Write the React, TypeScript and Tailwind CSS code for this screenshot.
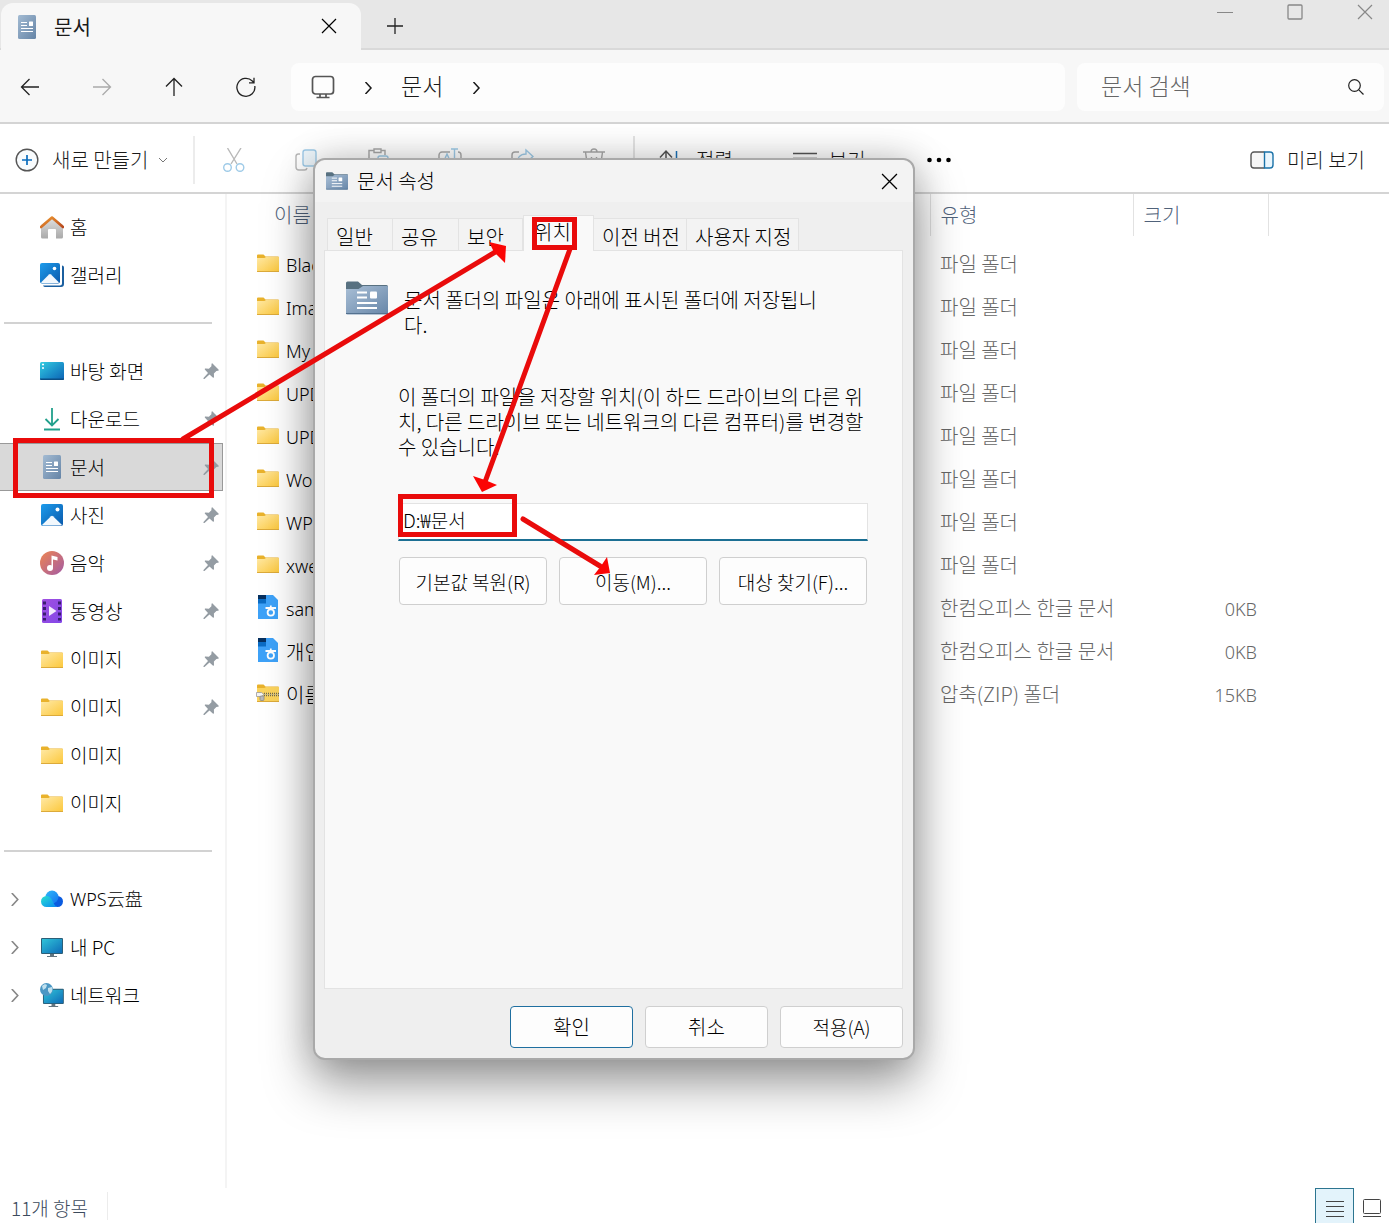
import React from 'react'

type IconProps = { className?: string }

const FolderIcon = ({ className = 'h-6 w-6' }: IconProps) => (
  <svg viewBox="0 0 24 24" className={className} aria-hidden="true">
    <defs>
      <linearGradient id="folderFace" x1="0" y1="0" x2="1" y2="1">
        <stop offset="0" stopColor="#ffe9a6" />
        <stop offset="1" stopColor="#fcc83c" />
      </linearGradient>
    </defs>
    <path d="M1 4.500a1 1 0 0 1 1-1h5.500l2 2H22a1 1 0 0 1 1 1V12H1z" fill="#e9b22c" />
    <path d="M1 7h7.500L10 6h12.500a.5.5 0 0 1 .5.500V20a.6.600 0 0 1-.6.600H1.600A.6.600 0 0 1 1 20z" fill="url(#folderFace)" />
    <path d="M1 20h22v.4a.6.600 0 0 1-.6.600H1.600a.6.600 0 0 1-.6-.6z" fill="#dcaa3a" />
  </svg>
)

const ZipIcon = () => (
  <svg viewBox="0 0 24 24" className="h-6 w-6" aria-hidden="true">
    <path d="M1 4.500a1 1 0 0 1 1-1h5.500l2 2H22a1 1 0 0 1 1 1V12H1z" fill="#e9b22c" />
    <path d="M1 7h7.500L10 6h13v15H1z" fill="#fbd35c" />
    <path d="M1 20h22v1H1z" fill="#dcaa3a" />
    <path d="M8 12.500h15M8 14.500h15" stroke="#6d674f" strokeWidth="1.400" strokeDasharray="1 1" />
    <path d="M8 13.500h15" stroke="#c9bd8a" strokeWidth=".8" />
    <path d="M.5 11.500h5l2.500 2-2.500 2h-5z" fill="#f4f4f4" stroke="#9b9b9b" strokeWidth=".8" />
    <rect x="4" y="15" width="4" height="4.500" rx="1" fill="#b9b9b9" stroke="#8c8c8c" strokeWidth=".8" />
  </svg>
)

const HangulDocIcon = () => (
  <svg viewBox="0 0 24 24" className="h-6 w-6" aria-hidden="true">
    <path d="M2 0h15l5 5v19H2z" fill="#3ea2f8" />
    <path d="M2 0h8v8.500H2z" fill="#0b6cc4" />
    <path d="M2 0h8v4H2z" fill="#06305f" />
    <g fill="none" stroke="#fff" strokeWidth="1.800">
      <circle cx="14.800" cy="17.500" r="3.200" />
      <path d="M9.500 13h10.500M14.800 10.500V13" />
    </g>
  </svg>
)

const DocIcon = ({ className = 'h-6 w-6' }: IconProps) => (
  <svg viewBox="0 0 24 24" className={className} aria-hidden="true">
    <defs>
      <linearGradient id="docFace" x1="0" y1="0" x2="1" y2="1">
        <stop offset="0" stopColor="#a3bbd3" />
        <stop offset="1" stopColor="#6584a6" />
      </linearGradient>
    </defs>
    <rect x="3" y="0" width="18" height="24" rx="1.500" fill="url(#docFace)" />
    <path d="M6 7.500h6M6 10.500h6M6 13.500h12M6 16.500h12" stroke="#fff" strokeWidth="1.100" />
    <rect x="14" y="6.500" width="4" height="4.500" rx=".5" fill="#fff" />
  </svg>
)

const DocFolderIcon = ({ className }: IconProps) => (
  <svg viewBox="0 0 42 34" className={className} aria-hidden="true">
    <defs>
      <linearGradient id="docFolder" x1="0" y1="0" x2="1" y2="1">
        <stop offset="0" stopColor="#a9bfd6" />
        <stop offset="1" stopColor="#6786a8" />
      </linearGradient>
    </defs>
    <path d="M0 2a1.500 1.500 0 0 1 1.500-1.500H12l4 3.500h24.500A1.500 1.500 0 0 1 42 5.500V20H0z" fill="#587181" />
    <path d="M0 8h12.500L17 5h24a1 1 0 0 1 1 1v26a1.500 1.500 0 0 1-1.500 1.500h-39A1.500 1.500 0 0 1 0 32z" fill="url(#docFolder)" />
    <path d="M0 32.500h42" stroke="#54718f" />
    <path d="M11 11.500h10M11 16.500h10M11 22h20M11 27h20" stroke="#fff" strokeWidth="1.800" />
    <rect x="24" y="10.500" width="7" height="7" rx="1" fill="#fff" />
  </svg>
)

const HomeIcon = () => (
  <svg viewBox="0 0 24 24" className="h-6 w-6" aria-hidden="true">
    <defs>
      <linearGradient id="homeWall" x1="0" y1="0" x2="0" y2="1">
        <stop offset="0" stopColor="#e4e4e4" />
        <stop offset="1" stopColor="#a9a9a9" />
      </linearGradient>
      <linearGradient id="homeRoof" x1="0" y1="0" x2="1" y2="1">
        <stop offset="0" stopColor="#f09a30" />
        <stop offset="1" stopColor="#b8481c" />
      </linearGradient>
    </defs>
    <path d="M1 10 12 1.500 23 10v12a1.500 1.500 0 0 1-1.500 1.500H16V15a1 1 0 0 0-1-1H9a1 1 0 0 0-1 1v8.500H2.500A1.500 1.500 0 0 1 1 22z" fill="url(#homeWall)" />
    <path d="M1 12 12 2.500 23 12" fill="none" stroke="url(#homeRoof)" strokeWidth="2.600" strokeLinecap="round" strokeLinejoin="round" />
  </svg>
)

const PictureIcon = () => (
  <svg viewBox="0 0 24 24" className="h-6 w-6" aria-hidden="true">
    <defs>
      <linearGradient id="pictureSky" x1="0" y1="0" x2="1" y2="1">
        <stop offset="0" stopColor="#1d9cec" />
        <stop offset="1" stopColor="#0a59ab" />
      </linearGradient>
    </defs>
    <rect x="1" y="1" width="22" height="22" rx="2" fill="url(#pictureSky)" />
    <circle cx="17.500" cy="6.500" r="2" fill="#fff" />
    <path d="M2 22 11 13.200a1.500 1.500 0 0 1 2 0L22 22a2 2 0 0 1-1 .5H3a2 2 0 0 1-1-.5z" fill="#f2f8fd" />
  </svg>
)

const GalleryIcon = () => (
  <svg viewBox="0 0 24 24" className="h-6 w-6" aria-hidden="true">
    <path d="M22 2.500a2 2 0 0 1 2 2V21a3 3 0 0 1-3 3H5a2 2 0 0 1-2-1.500h17a2 2 0 0 0 2-2z" fill="#1b5f9f" />
    <rect width="20" height="20.500" rx="2" fill="url(#pictureSky)" />
    <circle cx="14.500" cy="5.500" r="1.800" fill="#fff" />
    <path d="M1 19.500 9 11.400a1.500 1.500 0 0 1 2 0l8 8.100a2 2 0 0 1-1 .5H2a2 2 0 0 1-1-.5z" fill="#f2f8fd" />
  </svg>
)

const DesktopIcon = () => (
  <svg viewBox="0 0 24 24" className="h-6 w-6" aria-hidden="true">
    <defs>
      <linearGradient id="desktopFace" x1="0" y1="0" x2="1" y2="1">
        <stop offset="0" stopColor="#34cde0" />
        <stop offset=".5" stopColor="#1d96cc" />
        <stop offset="1" stopColor="#0c62b4" />
      </linearGradient>
    </defs>
    <rect y="3" width="24" height="18" rx="1.500" fill="url(#desktopFace)" />
    <path d="M2 5.500h2M2 9h2" stroke="#fff" strokeWidth="1.500" />
    <path d="M0 19.500h24V20a1 1 0 0 1-1 1H1a1 1 0 0 1-1-1z" fill="#0b4f86" />
  </svg>
)

const DownloadIcon = () => (
  <svg viewBox="0 0 24 24" className="h-6 w-6" fill="none" stroke="#22a08c" strokeWidth="1.800" aria-hidden="true">
    <path d="M12 1v17M5.500 12l6.500 6.500 6.500-6.500M4 22.500h16" />
  </svg>
)

const MusicIcon = () => (
  <svg viewBox="0 0 24 24" className="h-6 w-6" aria-hidden="true">
    <defs>
      <linearGradient id="musicFace" x1="0" y1="0" x2="1" y2="1">
        <stop offset="0" stopColor="#ee8551" />
        <stop offset="1" stopColor="#a35ba5" />
      </linearGradient>
    </defs>
    <circle cx="12" cy="12" r="12" fill="url(#musicFace)" />
    <path d="M11.500 4.500 17.500 6v3.500L13 8.500V17h-1.500z" fill="#fff" />
    <circle cx="10" cy="17" r="3" fill="#fff" />
  </svg>
)

const VideoIcon = () => (
  <svg viewBox="0 0 24 24" className="h-6 w-6" aria-hidden="true">
    <defs>
      <linearGradient id="videoFace" x1="0" y1="0" x2="1" y2="1">
        <stop offset="0" stopColor="#a04fe0" />
        <stop offset="1" stopColor="#8347e8" />
      </linearGradient>
    </defs>
    <rect x="2" y="0" width="20" height="24" rx="1.500" fill="url(#videoFace)" />
    <path d="M4.500 2.500v19M19.500 2.500v19" stroke="#3a1d70" strokeWidth="3" strokeDasharray="3 2.500" />
    <path d="M9 7v10l7.500-5z" fill="#f3eafd" />
  </svg>
)

const CloudIcon = () => (
  <svg viewBox="0 0 24 24" className="h-6 w-6" aria-hidden="true">
    <defs>
      <linearGradient id="cloudLeft" x1="0" y1="0" x2="1" y2="1">
        <stop offset="0" stopColor="#29e0d0" />
        <stop offset="1" stopColor="#0a86f4" />
      </linearGradient>
      <linearGradient id="cloudTop" x1="0" y1="0" x2="1" y2="1">
        <stop offset="0" stopColor="#2fb9f9" />
        <stop offset="1" stopColor="#1273ef" />
      </linearGradient>
    </defs>
    <circle cx="17.500" cy="14.500" r="5.500" fill="#0a5be0" />
    <circle cx="12" cy="10" r="6.500" fill="url(#cloudTop)" />
    <path d="M6.500 9a5.500 5.500 0 0 0 0 11h11c-2-.5-3-2-4.500-5s-3-6-6.500-6z" fill="url(#cloudLeft)" />
  </svg>
)

const Screen = () => (
  <g>
    <defs>
      <linearGradient id="screenFace" x1="0" y1="0" x2="1" y2="1">
        <stop offset="0" stopColor="#30c4d8" />
        <stop offset="1" stopColor="#0e6cb8" />
      </linearGradient>
    </defs>
    <rect x="1" y="3" width="22" height="16" rx="1" fill="#2c5f78" />
    <rect x="2" y="4" width="20" height="14" fill="url(#screenFace)" />
    <path d="M10 19h4v2h3v1H7v-1h3z" fill="#64757f" />
  </g>
)

const PcIcon = () => (
  <svg viewBox="0 0 24 24" className="h-6 w-6" aria-hidden="true">
    <Screen />
  </svg>
)

const NetworkIcon = () => (
  <svg viewBox="0 0 24 24" className="h-6 w-6" aria-hidden="true">
    <g transform="translate(2 3) scale(.95)">
      <Screen />
    </g>
    <circle cx="6.500" cy="6.500" r="6.500" fill="#4b97c4" />
    <path d="M2 3c2-2 4-2 5-1l-1 3-3 2zM8 5l4-1c1 3 0 5-2 7l-2-3z" fill="#bfe0ee" />
  </svg>
)

const PinIcon = () => (
  <svg viewBox="0 0 16 16" className="h-4 w-4" fill="#949ca3" aria-hidden="true">
    <path d="M9.500.500 15.500 6.500c.5.600.2 1.200-.6 1.300l-1.500.2-2.500 2.600.1 3.400c0 .8-.7 1-1.200.5L6.500 11.500 1.500 16 .500 16 .5 15 5 9.900 2 6.800c-.5-.5-.3-1.200.5-1.200l3.400.1 2.500-2.500.1-2c.1-.9.600-1.200 1-.7z" />
  </svg>
)

const Chevron = ({ className }: IconProps) => (
  <svg viewBox="0 0 12 12" className={className} fill="none" stroke="currentColor" aria-hidden="true">
    <path d="M3.500 0 9 6l-5.500 6" />
  </svg>
)

const ChevronDown = () => (
  <svg viewBox="0 0 10 10" className="h-[10px] w-[10px]" fill="none" stroke="#777" aria-hidden="true">
    <path d="M1 3l4 4 4-4" />
  </svg>
)

const Close = ({ className }: IconProps) => (
  <svg viewBox="0 0 16 16" className={className} fill="none" stroke="currentColor" strokeWidth="1.200" aria-hidden="true">
    <path d="M1 1l14 14M15 1 1 15" />
  </svg>
)

const toolIcons = [
  {
    name: '잘라내기',
    drawing: (
      <>
        <path d="M5.500 0l9.500 16M19 0 9 16" stroke="#b9b9b9" />
        <circle cx="5.500" cy="19.500" r="3.800" />
        <circle cx="18" cy="19.500" r="3.800" />
      </>
    ),
  },
  {
    name: '복사',
    drawing: (
      <>
        <path d="M6 6H4.500A2.500 2.500 0 0 0 2 8.500V19a3 3 0 0 0 3 3h5.500a2.500 2.500 0 0 0 2.500-2" stroke="#b9b9b9" />
        <rect x="9" y="2" width="13" height="16" rx="2.500" fill="#eef6fb" />
      </>
    ),
  },
  {
    name: '붙여넣기',
    drawing: (
      <>
        <path d="M8 2.500H3v19h8M15 2.500h4V7M8 1h7v3.500H8z" stroke="#a8a8a8" />
        <rect x="12" y="8" width="10" height="13" rx="2" />
      </>
    ),
  },
  {
    name: '이름 바꾸기',
    drawing: (
      <>
        <path d="M12 4H4a3 3 0 0 0-3 3v10a3 3 0 0 0 3 3h8M20 4a3 3 0 0 1 3 3v10a3 3 0 0 1-3 3" stroke="#a8a8a8" />
        <path d="M13 1h7M16.500 1v22M5 15l4-9 4 9" />
      </>
    ),
  },
  {
    name: '공유',
    drawing: (
      <>
        <path d="M9 4H5a3 3 0 0 0-3 3v12a3 3 0 0 0 3 3h11a3 3 0 0 0 3-3" stroke="#a8a8a8" />
        <path d="M16 2l7 6.500-7 6v-3.500c-4 0-6.500 1.500-9 4.500 0-5.500 3-9.500 9-9.500z" />
      </>
    ),
  },
  {
    name: '삭제',
    drawing: <path d="M1 4h22M3.500 4 6 22h12l2.500-18M9 4a3 3 0 0 1 6 0M9.500 9v8M14.500 9v8" stroke="#a8a8a8" />,
  },
]

const quickAccess = [
  { label: '바탕 화면', icon: <DesktopIcon />, pinned: true },
  { label: '다운로드', icon: <DownloadIcon />, pinned: true },
  { label: '문서', icon: <DocIcon />, pinned: true, selected: true },
  { label: '사진', icon: <PictureIcon />, pinned: true },
  { label: '음악', icon: <MusicIcon />, pinned: true },
  { label: '동영상', icon: <VideoIcon />, pinned: true },
  { label: '이미지', icon: <FolderIcon />, pinned: true },
  { label: '이미지', icon: <FolderIcon />, pinned: true },
  { label: '이미지', icon: <FolderIcon /> },
  { label: '이미지', icon: <FolderIcon /> },
]

const drives = [
  { label: 'WPS云盘', icon: <CloudIcon />, latin: true },
  { label: '내 PC', icon: <PcIcon /> },
  { label: '네트워크', icon: <NetworkIcon /> },
]

const files = [
  { name: 'Blac', type: '파일 폴더', size: '' },
  { name: 'Ima', type: '파일 폴더', size: '' },
  { name: 'My', type: '파일 폴더', size: '' },
  { name: 'UPD', type: '파일 폴더', size: '' },
  { name: 'UPD', type: '파일 폴더', size: '' },
  { name: 'Wo', type: '파일 폴더', size: '' },
  { name: 'WP', type: '파일 폴더', size: '' },
  { name: 'xwe', type: '파일 폴더', size: '' },
  { name: 'sam', type: '한컴오피스 한글 문서', size: '0KB', icon: <HangulDocIcon /> },
  { name: '개인', type: '한컴오피스 한글 문서', size: '0KB', icon: <HangulDocIcon />, hangul: true },
  { name: '이름', type: '압축(ZIP) 폴더', size: '15KB', icon: <ZipIcon />, hangul: true },
]

type SideItemProps = {
  label: string
  icon: React.ReactNode
  pinned?: boolean
  selected?: boolean
  expandable?: boolean
  latin?: boolean
}

const SideItem = ({ label, icon, pinned, selected, expandable, latin }: SideItemProps) => (
  <li>
    <a
      href="#"
      className={
        'mr-[2px] flex h-12 items-center border border-l-0 pr-[3px] text-black ' +
        (selected ? 'border-[#999] bg-[#d9d9d9]' : 'border-transparent')
      }
    >
      <span className="flex w-10 pl-2 text-[#888]">{expandable && <Chevron className="h-[13px] w-[13px] stroke-[1.500]" />}</span>
      {icon}
      <span className={'ml-[6px] flex-1 ' + (latin ? "font-['Noto_Sans','Noto_Sans_CJK_SC',sans-serif] text-lg" : 'text-[19px]')}>{label}</span>
      {pinned && <PinIcon />}
    </a>
  </li>
)

const TitleBar = () => (
  <header className="flex h-[50px] items-end border-b-2 border-[#d9d9d9] bg-[#e7e7e7]">
    <div className="-mb-[2px] ml-[1px] flex h-[47px] w-[360px] items-center rounded-t-xl bg-[#f7f7f7] pl-[14px] pr-6">
      <DocIcon />
      <span className="ml-[15px] flex-1 font-normal">문서</span>
      <button aria-label="탭 닫기" className="mb-[2px] text-black">
        <Close className="h-4 w-4" />
      </button>
    </div>
    <button aria-label="새 탭" className="mb-[14px] ml-[26px]">
      <svg viewBox="0 0 16 16" className="h-4 w-4" fill="none" stroke="#222" aria-hidden="true">
        <path d="M8 0v16M0 8h16" strokeWidth="1.300" />
      </svg>
    </button>
    <div className="mb-7 ml-auto flex gap-[54px] pr-4 text-[#888]">
      <button aria-label="최소화">
        <svg viewBox="0 0 16 16" className="h-4 w-4" stroke="currentColor" aria-hidden="true">
          <path d="M0 8.500h16" />
        </svg>
      </button>
      <button aria-label="최대화">
        <svg viewBox="0 0 16 16" className="h-4 w-4" fill="none" stroke="currentColor" aria-hidden="true">
          <rect x="1" y="1" width="14" height="14" rx="1" strokeWidth="1.300" />
        </svg>
      </button>
      <button aria-label="닫기">
        <Close className="h-4 w-4" />
      </button>
    </div>
  </header>
)

const NavBar = () => (
  <nav className="flex h-[74px] items-center gap-[21px] border-b-2 border-[#d4d4d4] bg-[#f7f7f7] pl-[6px] pr-[5px] pt-[2px]">
    <div className="flex gap-6">
      <button aria-label="뒤로" className="flex w-12 justify-center">
        <svg viewBox="0 0 20 20" className="h-5 w-5" fill="none" stroke="#222" strokeWidth="1.300" aria-hidden="true">
          <path d="M19 10H1.500M9.500 2l-8 8 8 8" />
        </svg>
      </button>
      <button aria-label="앞으로" className="flex w-12 justify-center">
        <svg viewBox="0 0 20 20" className="h-5 w-5" fill="none" stroke="#aaa" strokeWidth="1.300" aria-hidden="true">
          <path d="M1 10h17.500M10.500 2l8 8-8 8" />
        </svg>
      </button>
      <button aria-label="위로" className="flex w-12 justify-center">
        <svg viewBox="0 0 20 20" className="h-5 w-5" fill="none" stroke="#222" strokeWidth="1.300" aria-hidden="true">
          <path d="M10 19V1.500M2 9.500l8-8 8 8" />
        </svg>
      </button>
      <button aria-label="새로 고침" className="flex w-12 justify-center">
        <svg viewBox="0 0 20 20" className="h-5 w-5" fill="none" stroke="#222" strokeWidth="1.300" aria-hidden="true">
          <path d="M18.800 9a9 9 0 1 1-2.500-5L18 5.700M18 .8v5h-5" />
        </svg>
      </button>
    </div>
    <div className="flex flex-1 gap-3">
      <div className="flex h-12 flex-1 items-center rounded-lg bg-[#fdfdfd] pl-5 text-2xl">
        <svg viewBox="0 0 24 24" className="h-6 w-6" fill="none" stroke="#555" strokeWidth="1.700" aria-hidden="true">
          <rect x="1.500" y="1.500" width="21" height="17.500" rx="3" />
          <path d="M9 19v3M15 19v3M5.500 22.500h13" />
        </svg>
        <Chevron className="ml-[27px] mt-[2px] h-3 w-3 stroke-[1.500]" />
        <a href="#" className="ml-[27px] pb-[3px] text-[23px]">문서</a>
        <Chevron className="ml-[27px] mt-[2px] h-3 w-3 stroke-[1.500]" />
      </div>
      <label className="flex h-12 w-[307px] items-center rounded-lg bg-[#fdfdfd] pl-6 pr-5">
        <input type="search" placeholder="문서 검색" aria-label="문서 검색" className="min-w-0 flex-1 bg-transparent pb-[3px] text-[23px] outline-none placeholder:text-[#666]" />
        <svg viewBox="0 0 16 16" className="h-4 w-4" fill="none" stroke="#222" strokeWidth="1.200" aria-hidden="true">
          <circle cx="6.500" cy="6.500" r="5.800" />
          <path d="M10.800 10.800 15.500 15.500" />
        </svg>
      </label>
    </div>
  </nav>
)

const ToolBar = () => (
  <div className="flex h-[70px] items-center border-b-2 border-[#d4d4d4] bg-white pl-[15px] pr-6 pt-1">
    <button className="flex w-[178px] items-center">
      <svg viewBox="0 0 24 24" className="h-6 w-6" fill="none" stroke="#555" strokeWidth="1.400" aria-hidden="true">
        <circle cx="12" cy="12" r="10.800" fill="#f8fbfd" />
        <path d="M12 7v10M7 12h10" stroke="#0a6cbd" strokeWidth="1.700" />
      </svg>
      <span className="ml-[13px] mr-[10px]">새로 만들기</span>
      <ChevronDown />
    </button>
    <span className="h-12 w-[2px] bg-[#ececec]" />
    <div className="flex gap-12 px-[27px]">
      {toolIcons.map((tool) => (
        <button key={tool.name} aria-label={tool.name}>
          <svg viewBox="0 0 24 24" className="h-6 w-6" fill="none" stroke="#9fcbe8" strokeWidth="1.400" aria-hidden="true">
            {tool.drawing}
          </svg>
        </button>
      ))}
    </div>
    <span className="h-12 w-[2px] bg-[#e4e4e4]" />
    <button className="ml-[23px] flex items-center">
      <svg viewBox="0 0 24 24" className="h-6 w-6" fill="none" stroke="#555" strokeWidth="1.500" aria-hidden="true">
        <path d="M8 22V3.500M2 9.500l6-6.500 6 6.500" />
        <path d="M18.500 3v18l4-4" stroke="#1a72b8" />
      </svg>
      <span className="ml-[14px] mr-2">정렬</span>
      <ChevronDown />
    </button>
    <button className="ml-[42px] flex items-center">
      <svg viewBox="0 0 24 24" className="h-6 w-6" stroke="#555" strokeWidth="1.500" aria-hidden="true">
        <path d="M0 5.500h24M0 10.500h24M0 15.500h24" />
      </svg>
      <span className="ml-3 mr-2">보기</span>
      <ChevronDown />
    </button>
    <button aria-label="자세히" className="ml-[43px]">
      <svg viewBox="0 0 24 6" className="h-[6px] w-6" aria-hidden="true">
        <circle cx="2.500" cy="3" r="2.300" />
        <circle cx="12" cy="3" r="2.300" />
        <circle cx="21.500" cy="3" r="2.300" />
      </svg>
    </button>
    <button className="ml-auto flex items-center">
      <svg viewBox="0 0 24 24" className="mr-[13px] h-6 w-6" fill="#f6f6f6" stroke="#555" strokeWidth="1.400" aria-hidden="true">
        <path d="M14.500 4H4a3 3 0 0 0-3 3v10a3 3 0 0 0 3 3h10.500" />
        <path d="M14.500 4H20a3 3 0 0 1 3 3v10a3 3 0 0 1-3 3h-5.500z" stroke="#1a72a8" fill="#eaf6fd" />
      </svg>
      미리 보기
    </button>
  </div>
)

const SideBar = () => (
  <aside className="w-[227px] shrink-0 border-r-2 border-[#f4f4f4] pt-[9px]">
    <ul>
      <SideItem label="홈" icon={<HomeIcon />} />
      <SideItem label="갤러리" icon={<GalleryIcon />} />
    </ul>
    <hr className="my-[23px] ml-1 mr-[13px] border-t-2 border-[#d2d2d2]" />
    <ul>
      {quickAccess.map((item, i) => (
        <SideItem key={i} {...item} />
      ))}
    </ul>
    <hr className="my-[23px] ml-1 mr-[13px] border-t-2 border-[#d2d2d2]" />
    <ul>
      {drives.map((item) => (
        <SideItem key={item.label} {...item} expandable />
      ))}
    </ul>
  </aside>
)

const FileTable = () => (
  <main className="min-w-0 flex-1">
    <table className="w-full table-fixed border-collapse text-left">
      <colgroup>
        <col />
        <col className="w-[203px]" />
        <col className="w-[135px]" />
        <col className="w-[121px]" />
      </colgroup>
      <thead>
        <tr className="h-[42px] text-[#50627a]">
          <th className="border-r border-[#e2e2e2] pl-[47px] font-light">이름</th>
          <th className="border-r border-[#e2e2e2] pl-[10px] font-light">유형</th>
          <th className="border-r border-[#e2e2e2] pl-[10px] font-light">크기</th>
          <td />
        </tr>
      </thead>
      <tbody className="before:block before:h-[7px]">
        {files.map((file, i) => (
          <tr key={i} className="h-[43px] text-[#666]">
            <td className="pl-[29px]">
              <span className="flex items-center gap-[6px] text-black">
                <span className="mb-1">{file.icon || <FolderIcon />}</span>
                <span className={file.hangul ? '' : "font-['Noto_Sans',sans-serif] text-lg"}>{file.name}</span>
              </span>
            </td>
            <td className="pb-[2px] pl-[10px]">{file.type}</td>
            <td className="pr-[11px] text-right font-['Noto_Sans',sans-serif] text-lg">{file.size}</td>
            <td />
          </tr>
        ))}
      </tbody>
    </table>
  </main>
)

const StatusBar = () => (
  <footer className="flex h-[35px] items-center pl-[11px]">
    <span className="w-[97px] border-r border-[#ececec] pt-1 text-[19px] leading-6 text-[#3c4a5c]">11개 항목</span>
    <div className="ml-auto flex h-full">
      <button aria-label="자세히 보기" className="flex w-[39px] items-center justify-center border border-b-0 border-[#2c7590] bg-[#e3f3fb] pt-1">
        <svg viewBox="0 0 18 18" className="h-[18px] w-[18px]" stroke="#444" aria-hidden="true">
          <path d="M0 2.500h18M0 7.500h18M0 12.500h18M0 17.500h18" />
        </svg>
      </button>
      <button aria-label="큰 아이콘" className="flex w-[35px] items-center justify-center pt-1">
        <svg viewBox="0 0 18 18" className="h-[18px] w-[18px]" fill="none" stroke="#444" aria-hidden="true">
          <rect x=".5" y=".5" width="17" height="14" rx="1" />
          <path d="M0 17.500h18" />
        </svg>
      </button>
    </div>
  </footer>
)

const tabs = [
  { label: '일반', size: 'w-[66px]' },
  { label: '공유', size: 'w-[66px]' },
  { label: '보안', size: 'w-[64px]' },
  { label: '위치', size: 'w-[71px]', active: true },
  { label: '이전 버전', size: 'w-[93px]' },
  { label: '사용자 지정', size: 'w-[112px]' },
]

const PropertiesDialog = () => (
  <section
    role="dialog"
    aria-label="문서 속성"
    className="absolute left-[313px] top-[158px] z-10 flex h-[902px] w-[602px] flex-col rounded-xl border-2 border-[#a9a9a9] bg-[#efefef] text-black shadow-[0_24px_50px_rgba(0,0,0,0.38),0_0_36px_rgba(0,0,0,0.18)]"
  >
    <div className="flex h-[42px] items-center rounded-t-xl bg-[#f3f3f3] pl-[11px] pr-[15px]">
      <DocFolderIcon className="h-[18px] w-[22px]" />
      <h1 className="ml-[9px] flex-1">문서 속성</h1>
      <button aria-label="닫기">
        <Close className="h-[17px] w-[17px]" />
      </button>
    </div>
    <div role="tablist" className="mt-[13px] flex items-end pl-3">
      {tabs.map((tab) => (
        <button
          key={tab.label}
          role="tab"
          aria-selected={!!tab.active}
          className={
            tab.size +
            ' shrink-0 whitespace-nowrap border-[#e3e3e3] text-left ' +
            (tab.active
              ? 'relative z-10 -mb-[1px] h-[36px] border-x border-t bg-[#f9f9f9] pb-1 pl-[10px]'
              : 'h-[32px] border-r border-t bg-[#f3f3f3] pl-2 pt-1 first:border-l')
          }
        >
          {tab.label}
        </button>
      ))}
    </div>
    <div role="tabpanel" className="ml-[9px] mr-[10px] flex-1 border border-[#e3e3e3] bg-[#f9f9f9] pl-[21px] pt-[29px] leading-[25px]">
      <div className="flex gap-4">
        <DocFolderIcon className="mt-[1px] h-[34px] w-[42px] shrink-0" />
        <p className="mt-[7px] w-[430px] break-all">문서 폴더의 파일은 아래에 표시된 폴더에 저장됩니다.</p>
      </div>
      <div className="ml-[52px] mt-[47px] w-[470px]">
        <p className="break-all">이 폴더의 파일을 저장할 위치(이 하드 드라이브의 다른 위치, 다른 드라이브 또는 네트워크의 다른 컴퓨터)를 변경할 수 있습니다.</p>
        <input
          aria-label="폴더 위치"
          defaultValue="D:₩문서"
          className="mt-11 h-[38px] w-full border border-b-2 border-[#e3e3e3] border-b-[#1b6f93] bg-white pb-1 pl-1 text-[19px] outline-none"
        />
        <div className="mt-4 flex gap-3 px-[1px] text-[19px]">
          <button className="h-12 flex-1 rounded border border-[#cfcfcf] bg-[#fdfdfd]">기본값 복원(R)</button>
          <button className="h-12 flex-1 rounded border border-[#cfcfcf] bg-[#fdfdfd]">이동(M)...</button>
          <button className="h-12 flex-1 rounded border border-[#cfcfcf] bg-[#fdfdfd]">대상 찾기(F)...</button>
        </div>
      </div>
    </div>
    <div className="flex justify-end gap-3 px-[10px] pb-[10px] pt-[17px]">
      <button className="h-[42px] w-[123px] rounded border border-[#1f6fa0] bg-[#fdfdfd]">확인</button>
      <button className="h-[42px] w-[123px] rounded border border-[#cfcfcf] bg-[#fdfdfd]">취소</button>
      <button className="h-[42px] w-[123px] rounded border border-[#cfcfcf] bg-[#fdfdfd] text-[19px]">적용(A)</button>
    </div>
  </section>
)

// red boxes and arrows that walk through the steps
const Annotations = () => (
  <svg width="920" height="640" className="pointer-events-none absolute left-0 top-0 z-20" fill="none" stroke="#e90b0b" strokeWidth="5" aria-hidden="true">
    <rect x="15.500" y="440.500" width="196" height="55" />
    <rect x="534.500" y="219.500" width="40" height="28" />
    <rect x="400.500" y="496.500" width="114" height="38" />
    <path d="M183 439 497 251M570 249 485 482M523 519l77 47" strokeLinecap="round" />
    <g fill="#fb0505" stroke="none">
      <path d="M506 246l-17-4 5 10 11 11z" />
      <path d="M482 492l-9-16 12 4 12 5z" />
      <path d="M610 573l-3-16-6 9-7 9z" />
    </g>
  </svg>
)

const App = () => {
  return (
    <div className="relative flex min-h-screen flex-col overflow-hidden bg-white font-['Noto_Sans_CJK_KR',sans-serif] text-xl font-light text-[#1a1a1a]">
      <TitleBar />
      <NavBar />
      <ToolBar />
      <div className="flex flex-1">
        <SideBar />
        <FileTable />
      </div>
      <StatusBar />
      <PropertiesDialog />
      <Annotations />
    </div>
  )
}

export default App
